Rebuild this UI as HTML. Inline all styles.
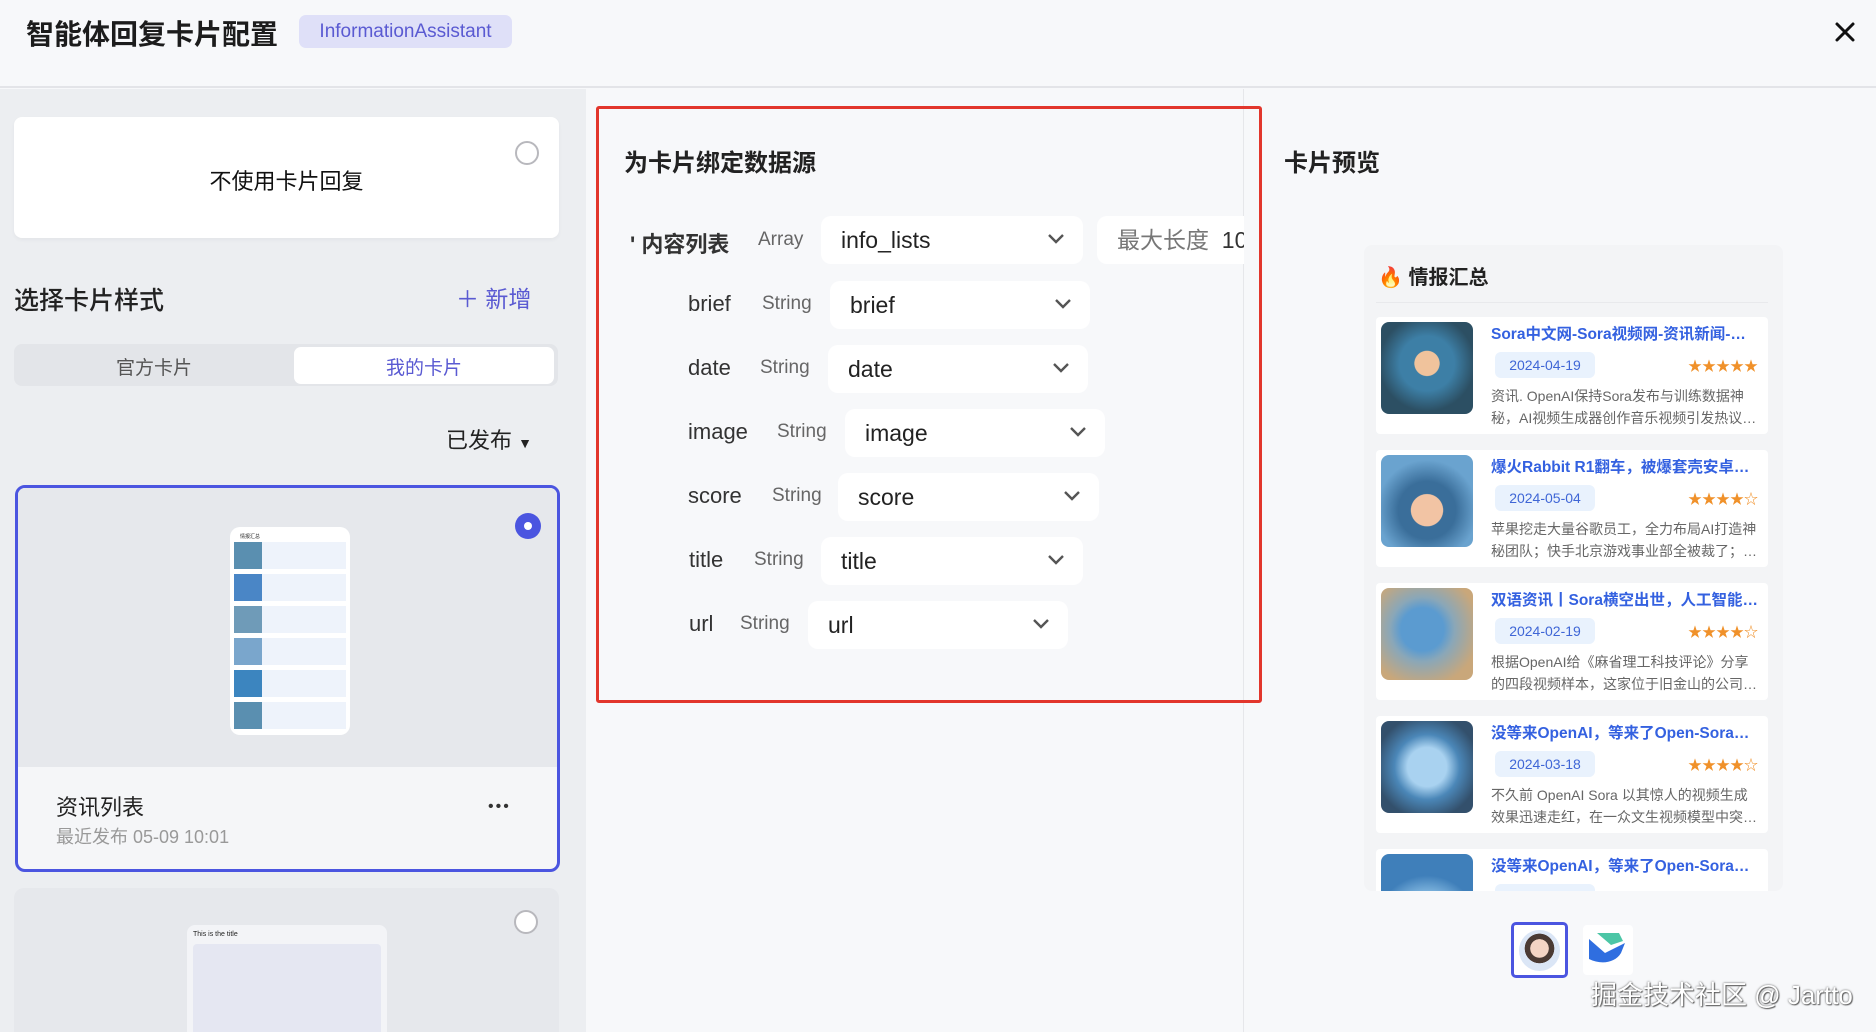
<!DOCTYPE html>
<html style="overflow:hidden;width:1876px;height:1032px"><head><meta charset="utf-8"><style>
*{box-sizing:border-box;margin:0;padding:0}
body{width:1876px;height:1032px;overflow:hidden;background:#f7f8fa;font-family:"Liberation Sans","Noto Sans CJK SC",sans-serif;position:relative;color:#1f1f1f}
.a{position:absolute}
.hdr{left:0;top:0;width:1876px;height:88px;background:#f7f8fa;border-bottom:2px solid #e3e4e8}
.left{left:0;top:89px;width:586px;height:943px;background:#eceef1}
.mid{left:586px;top:89px;width:658px;height:943px;background:#f7f8fa;border-right:1px solid #e6e7ea}
.radio{width:24px;height:24px;border-radius:50%;border:2px solid #b8b8bd;background:#fff}
.sel{background:#fff;border-radius:10px;height:48px;font-size:23px;color:#222;padding-left:20px;line-height:48px;white-space:nowrap;overflow:hidden}
.sel svg{position:absolute;right:18px;top:16px}
.lbl{font-size:22px;color:#333}
.typ{font-size:19px;color:#666}
.item{left:1376px;width:392px;height:117px;background:#fff;border-radius:4px;overflow:hidden}
.img{left:5px;top:5px;width:92px;height:92px;border-radius:8px}
.t{left:115px;top:5px;font-size:15.5px;font-weight:bold;color:#3461e0;white-space:nowrap;width:270px;overflow:hidden;text-overflow:ellipsis}
.pill{left:119px;top:35px;width:100px;height:26px;border-radius:6px;background:#e9f2fd;color:#3f66d6;font-size:14px;text-align:center;line-height:26px}
.st{right:10px;top:39px;font-size:14px;color:#f0912a;letter-spacing:0}
.br{left:115px;top:68px;width:268px;font-size:14px;color:#666;line-height:22px;height:44px;overflow:hidden;display:-webkit-box;-webkit-line-clamp:2;-webkit-box-orient:vertical}
</style></head><body>
<div class="a hdr"></div>
<div class="a" style="left:26px;top:13px;font-size:28px;font-weight:bold;color:#1c1c1c">智能体回复卡片配置</div>
<div class="a" style="left:299px;top:15px;width:213px;height:33px;background:#dfe0f8;border-radius:7px;color:#5a5ad2;font-size:19px;line-height:33px;text-align:center">InformationAssistant</div>
<svg class="a" style="left:1834px;top:21px" width="22" height="22" viewBox="0 0 22 22"><path d="M3 3L19 19M19 3L3 19" stroke="#111" stroke-width="3" stroke-linecap="round"/></svg>

<div class="a left"></div>
<div class="a" style="left:14px;top:117px;width:545px;height:121px;background:#fff;border-radius:8px;box-shadow:0 2px 4px rgba(0,0,0,.04)"></div>
<div class="a" style="left:0;top:164px;width:573px;text-align:center;font-size:22px;color:#111">不使用卡片回复</div>
<div class="a radio" style="left:515px;top:141px"></div>
<div class="a" style="left:14px;top:281px;font-size:25px;color:#222;font-weight:500">选择卡片样式</div>
<div class="a" style="left:456px;top:280px;font-size:23px;color:#5a5ad2">＋ 新增</div>
<div class="a" style="left:14px;top:344px;width:544px;height:42px;background:#e3e5e9;border-radius:8px"></div>
<div class="a" style="left:294px;top:347px;width:260px;height:37px;background:#fff;border-radius:7px"></div>
<div class="a" style="left:14px;top:353px;width:280px;text-align:center;font-size:19px;color:#555">官方卡片</div>
<div class="a" style="left:294px;top:353px;width:260px;text-align:center;font-size:19px;color:#5a5ad2">我的卡片</div>
<div class="a" style="left:446px;top:423px;font-size:22px;color:#222">已发布 <span style="font-size:14px">▼</span></div>

<div class="a" style="left:15px;top:485px;width:545px;height:387px;border:3px solid #4b55e0;border-radius:10px;overflow:hidden;background:#f5f6f8">
 <div class="a" style="left:0;top:0;width:539px;height:279px;background:#e6e8ec"></div>
 <div class="a" style="left:212px;top:39px;width:120px;height:208px;background:#fff;border-radius:10px;padding:4px">
  <div style="font-size:5px;margin:2px 6px">情报汇总</div>
  <div style="display:grid;gap:5px">
   <div style="height:27px;background:linear-gradient(90deg,#5a8fb0 28px,#eef3fb 28px)"></div>
   <div style="height:27px;background:linear-gradient(90deg,#4a86c6 28px,#eef3fb 28px)"></div>
   <div style="height:27px;background:linear-gradient(90deg,#6f9bb8 28px,#eef3fb 28px)"></div>
   <div style="height:27px;background:linear-gradient(90deg,#7aa6cc 28px,#eef3fb 28px)"></div>
   <div style="height:27px;background:linear-gradient(90deg,#3c85bf 28px,#eef3fb 28px)"></div>
   <div style="height:27px;background:linear-gradient(90deg,#5a8fb0 28px,#eef3fb 28px)"></div>
  </div>
 </div>
 <div class="a" style="left:38px;top:302px;font-size:22px;color:#222">资讯列表</div>
 <div class="a" style="left:38px;top:335px;font-size:18px;color:#999">最近发布 05-09 10:01</div>
 <div class="a" style="left:470px;top:310px;font-size:16px;color:#333;letter-spacing:2px">•••</div>
 <div class="a" style="left:497px;top:25px;width:26px;height:26px;border-radius:50%;background:#4b55e0"><div style="margin:9px;width:8px;height:8px;border-radius:50%;background:#fff"></div></div>
</div>
<div class="a" style="left:14px;top:888px;width:545px;height:144px;background:#e6e8ec;border-radius:10px 10px 0 0"></div>
<div class="a" style="left:187px;top:925px;width:200px;height:107px;background:#f3f4f7;border-radius:8px 8px 0 0;overflow:hidden"><div style="font-size:7px;margin:6px">This is the title</div><div style="margin:0 6px;height:100px;background:#e5e7f2;border-radius:4px"></div></div>
<div class="a radio" style="left:514px;top:910px"></div>

<div class="a mid"></div>
<div class="a" style="left:596px;top:106px;width:666px;height:597px;border:3px solid #e2362c;border-radius:3px"></div>
<div class="a" style="left:624px;top:143px;font-size:24px;font-weight:bold;color:#222">为卡片绑定数据源</div>

<div class="a lbl" style="left:630px;top:227px;font-weight:bold">' 内容列表</div>
<div class="a typ" style="left:758px;top:229px">Array</div>
<div class="a sel" style="left:821px;top:216px;width:262px">info_lists<svg width="18" height="14" viewBox="0 0 18 14"><path d="M2 3l7 7 7-7" stroke="#555" stroke-width="2.4" fill="none"/></svg></div>
<div class="a sel" style="left:1097px;top:216px;width:147px;color:#777;border-radius:10px 0 0 10px">最大长度 &nbsp;<span style="color:#333">10</span></div>

<div class="a lbl" style="left:688px;top:291px">brief</div><div class="a typ" style="left:762px;top:293px">String</div>
<div class="a sel" style="left:830px;top:281px;width:260px">brief<svg width="18" height="14" viewBox="0 0 18 14"><path d="M2 3l7 7 7-7" stroke="#555" stroke-width="2.4" fill="none"/></svg></div>
<div class="a lbl" style="left:688px;top:355px">date</div><div class="a typ" style="left:760px;top:357px">String</div>
<div class="a sel" style="left:828px;top:345px;width:260px">date<svg width="18" height="14" viewBox="0 0 18 14"><path d="M2 3l7 7 7-7" stroke="#555" stroke-width="2.4" fill="none"/></svg></div>
<div class="a lbl" style="left:688px;top:419px">image</div><div class="a typ" style="left:777px;top:421px">String</div>
<div class="a sel" style="left:845px;top:409px;width:260px">image<svg width="18" height="14" viewBox="0 0 18 14"><path d="M2 3l7 7 7-7" stroke="#555" stroke-width="2.4" fill="none"/></svg></div>
<div class="a lbl" style="left:688px;top:483px">score</div><div class="a typ" style="left:772px;top:485px">String</div>
<div class="a sel" style="left:838px;top:473px;width:261px">score<svg width="18" height="14" viewBox="0 0 18 14"><path d="M2 3l7 7 7-7" stroke="#555" stroke-width="2.4" fill="none"/></svg></div>
<div class="a lbl" style="left:689px;top:547px">title</div><div class="a typ" style="left:754px;top:549px">String</div>
<div class="a sel" style="left:821px;top:537px;width:262px">title<svg width="18" height="14" viewBox="0 0 18 14"><path d="M2 3l7 7 7-7" stroke="#555" stroke-width="2.4" fill="none"/></svg></div>
<div class="a lbl" style="left:689px;top:611px">url</div><div class="a typ" style="left:740px;top:613px">String</div>
<div class="a sel" style="left:808px;top:601px;width:260px">url<svg width="18" height="14" viewBox="0 0 18 14"><path d="M2 3l7 7 7-7" stroke="#555" stroke-width="2.4" fill="none"/></svg></div>

<div class="a" style="left:1284px;top:143px;font-size:24px;font-weight:bold;color:#222">卡片预览</div>
<div class="a" style="left:1364px;top:245px;width:419px;height:646px;background:#f3f4f6;border-radius:8px"></div>
<div class="a" style="left:1378px;top:261px;font-size:20px;font-weight:bold;color:#222"><span style="color:#f06a1d">🔥</span> 情报汇总</div>
<div class="a" style="left:1376px;top:302px;width:392px;height:1px;background:#e8e9ec"></div>
<div class="a" style="left:1376px;top:317px;width:392px;height:574px;overflow:hidden">
 <div class="a item" style="left:0;top:0"><div class="a img" style="background:radial-gradient(circle at 50% 45%,#f0c39c 0 18%,#3d7fa6 19% 40%,#2c4f63 70%)"></div><div class="a t">Sora中文网-Sora视频网-资讯新闻-资讯</div><div class="a pill">2024-04-19</div><div class="a st">★★★★★</div><div class="a br">资讯. OpenAI保持Sora发布与训练数据神秘，AI视频生成器创作音乐视频引发热议. OpenAI发布</div></div>
 <div class="a item" style="left:0;top:133px"><div class="a img" style="background:radial-gradient(circle at 50% 60%,#f2c4a4 0 22%,#3a6e9a 23% 40%,#6aa3cf 70%)"></div><div class="a t">爆火Rabbit R1翻车，被爆套壳安卓；谷歌</div><div class="a pill">2024-05-04</div><div class="a st">★★★★☆</div><div class="a br">苹果挖走大量谷歌员工，全力布局AI打造神秘团队；快手北京游戏事业部全被裁了；谷歌员工</div></div>
 <div class="a item" style="left:0;top:266px"><div class="a img" style="background:radial-gradient(circle at 45% 45%,#5b9bd0 0 30%,#8aa7b8 45%,#c9a77a 80%)"></div><div class="a t">双语资讯丨Sora横空出世，人工智能来了</div><div class="a pill">2024-02-19</div><div class="a st">★★★★☆</div><div class="a br">根据OpenAI给《麻省理工科技评论》分享的四段视频样本，这家位于旧金山的公司已经突破了</div></div>
 <div class="a item" style="left:0;top:399px"><div class="a img" style="background:radial-gradient(circle at 50% 50%,#a9d2f0 0 30%,#4b87b8 50%,#33506c 80%)"></div><div class="a t">没等来OpenAI，等来了Open-Sora全面开源</div><div class="a pill">2024-03-18</div><div class="a st">★★★★☆</div><div class="a br">不久前 OpenAI Sora 以其惊人的视频生成效果迅速走红，在一众文生视频模型中突出重围成为</div></div>
 <div class="a item" style="left:0;top:532px"><div class="a img" style="background:radial-gradient(circle at 50% 80%,#9fd0f0 0 30%,#3f7fba 60%)"></div><div class="a t">没等来OpenAI，等来了Open-Sora全面开源</div><div class="a pill">2024-03-18</div></div>
</div>
<div class="a" style="left:1511px;top:922px;width:57px;height:56px;border:3px solid #4b55e0;border-radius:5px;background:#fff"><div style="margin:5px;width:41px;height:41px;border-radius:50%;background:radial-gradient(circle at 50% 45%,#f4d4c4 0 30%,#4a3a34 31% 48%,#dbe6f6 49%)"></div></div>
<div class="a" style="left:1583px;top:925px;width:50px;height:50px;background:#fff;border-radius:4px"><svg width="50" height="50" viewBox="0 0 50 50"><path d="M6 14l16 14 20-10-4 10c-6 10-20 12-32 6z" fill="#2f6ee0"/><path d="M14 8l14 12 12-4-4-8z" fill="#4cc6a6"/></svg></div>
<div class="a" style="left:1591px;top:975px;font-size:26px;color:#fff;text-shadow:0 0 2px #555,1px 1px 1px #666;white-space:nowrap">掘金技术社区 @ Jartto</div>
</body></html>
